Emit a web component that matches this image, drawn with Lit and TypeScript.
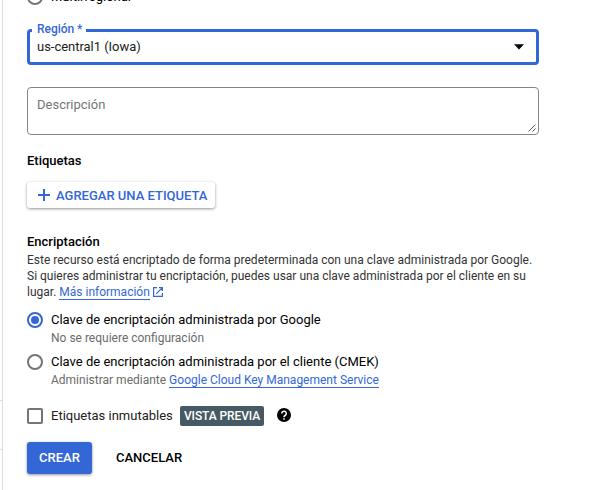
import { LitElement, html, css } from "lit";
import { customElement, property, state } from "lit/decorators.js";
import { classMap } from "lit/directives/class-map.js";

@customElement("radio-option")
class RadioOption extends LitElement {
  @property() label = "";
  @property({ type: Boolean }) checked = false;

  static styles = css`
    :host { display: grid; grid-template-columns: 16px 1fr; column-gap: 8px; }
    .dot { box-sizing: border-box; width: 16px; height: 16px; border: 2px solid #757575; border-radius: 50%; display: grid; place-items: center; }
    .dot.on { border-color: #3367d6; }
    .dot.on::after { content: ""; width: 8px; height: 8px; border-radius: 50%; background: #3367d6; }
    .label { font-size: 13px; line-height: 16px; color: #000; white-space: nowrap; }
    .hint { grid-column: 2; margin-top: 2px; font-size: 12px; line-height: 16px; color: #6b6b6b; white-space: nowrap; }
  `;

  render() {
    return html`
      <span class=${classMap({ dot: true, on: this.checked })}></span>
      <span class="label">${this.label}</span>
      <span class="hint"><slot></slot></span>
    `;
  }
}

@customElement("app-root")
class AppRoot extends LitElement {
  @state() private managed = "google";

  static styles = css`
    :host { display: grid; grid-template-columns: 3px 1fr; width: 616px; height: 490px; overflow: hidden; background: #fff; font-family: Roboto, sans-serif; }
    * { box-sizing: border-box; }
    .rail { border-right: 1px solid #dcdcdc; padding-top: 400px; display: flex; flex-direction: column; gap: 48px; }
    .rail i { height: 1px; background: #dcdcdc; }
    .form { width: 536px; padding-left: 24px; display: flex; flex-direction: column; min-height: 0; }
    .form > * { flex-shrink: 0; }
    .multi { margin-top: -11px; height: 16px; }
    .select { display: grid; height: 36px; margin: 24px 0 0; padding: 0; border: 3px solid #3367d6; border-radius: 4px; position: relative; }
    .value { display: flex; align-items: center; justify-content: space-between; padding: 0 11px 0 7px; font-size: 13px; color: #212121; }
    .value span { padding-bottom: 1px; letter-spacing: -0.03px; }
    .caption { position: absolute; left: 2px; top: -9px; padding: 0 4px 0 5px; background: #fff; color: #3367d6; font-size: 12px; font-weight: 500; line-height: 12px; letter-spacing: -0.03px; }
    .area { height: 48px; margin-top: 22px; border: 1px solid #80868b; border-radius: 4px; padding: 9px 2px 2px 9px; font-size: 13px; line-height: 16px; color: #757575; display: flex; justify-content: space-between; }
    .grip { align-self: flex-end; }
    .title { margin: 0; font-size: 13px; font-weight: 500; line-height: 16px; color: #000; }
    .tags { margin-top: 18px; }
    .add { margin-top: 13px; width: 188px; height: 26px; border-radius: 3px; background: #fff; box-shadow: 0 1px 3px rgba(0,0,0,.42); color: #3367d6; font-size: 13px; font-weight: 500; display: flex; align-items: center; gap: 6px; padding-left: 11px; white-space: nowrap; }
    .crypt { margin-top: 26px; }
    .text { margin: 2px 0 0; font-size: 12px; line-height: 16px; color: #333; white-space: nowrap; }
    .text span { display: block; }
    a { color: #3367d6; text-decoration: none; box-shadow: 0 1px #3367d6; }
    .text svg { vertical-align: -2px; margin-left: 2px; }
    .first { margin-top: 12px; }
    .second { margin-top: 8px; }
    .lock { display: flex; align-items: center; height: 20px; margin-top: 18px; font-size: 13px; color: #212121; white-space: nowrap; }
    .box { width: 16px; height: 16px; border: 2px solid #757575; border-radius: 2px; margin-right: 8px; }
    .lock .name { width: 129px; padding-bottom: 2px; }
    .help { margin-bottom: 2px; }
    .badge { width: 84px; height: 20px; border-radius: 2px; background: #455a64; color: #fff; font-size: 12px; font-weight: 500; line-height: 20px; text-align: center; letter-spacing: -0.1px; margin-right: 13px; }
    .actions { display: flex; margin-top: 16px; height: 32px; font-size: 13px; font-weight: 500; line-height: 32px; }
    .create { width: 65px; border-radius: 3px; text-align: center; background: #3367d6; color: #fff; box-shadow: 0 1px 3px rgba(0,0,0,.42); }
    .cancel { margin-left: 24px; color: #000; }
  `;

  render() {
    return html`
      <div class="rail"><i></i><i></i></div>
      <main class="form">
        <radio-option class="multi" label="Multirregional"></radio-option>
        <div class="select">
          <span class="caption">Región *</span>
          <div class="value">
            <span>us-central1 (Iowa)</span>
            <svg width="12" height="6" viewBox="0 0 12 6"><path d="M1 .3h10L6 5.5z" /></svg>
          </div>
        </div>
        <div class="area">
          <span>Descripción</span>
          <svg class="grip" width="8" height="8" viewBox="0 0 8 8" fill="none" stroke="#555"><path d="M.5 7.5l7-7M4.5 7.5l3-3" /></svg>
        </div>
        <h3 class="title tags">Etiquetas</h3>
        <div class="add">
          <svg width="12" height="12" viewBox="0 0 12 12" fill="#3367d6"><path d="M5 0h2v5h5v2H7v5H5V7H0V5h5z" /></svg>
          <span>AGREGAR UNA ETIQUETA</span>
        </div>
        <h3 class="title crypt">Encriptación</h3>
        <p class="text">
          <span>Este recurso está encriptado de forma predeterminada con una clave administrada por Google.</span>
          <span>Si quieres administrar tu encriptación, puedes usar una clave administrada por el cliente en su</span>
          <span>lugar. <a>Más información</a><svg width="12" height="12" viewBox="0 0 12 12" fill="none" stroke="#3367d6" stroke-width="1.2"><path d="M5 1.6H1.6v8.8h8.8V7M7 1.6h3.4V5M10.2 1.8L4.2 7.8" /></svg></span>
        </p>
        <radio-option class="first" label="Clave de encriptación administrada por Google" ?checked=${this.managed === "google"}>No se requiere configuración</radio-option>
        <radio-option class="second" label="Clave de encriptación administrada por el cliente (CMEK)" ?checked=${this.managed === "customer"}>Administrar mediante <a>Google Cloud Key Management Service</a></radio-option>
        <div class="lock">
          <span class="box"></span>
          <span class="name">Etiquetas inmutables</span>
          <span class="badge">VISTA PREVIA</span>
          <svg class="help" width="14" height="14" viewBox="0 0 14 14"><circle cx="7" cy="7" r="7" /><path d="M4.7 5.5a2.3 2.3 0 1 1 3.7 1.8C7.5 8 7 8.1 7 9.3M7 10.2v1.6" fill="none" stroke="#fff" stroke-width="1.5" /></svg>
        </div>
        <div class="actions">
          <span class="create">CREAR</span>
          <span class="cancel">CANCELAR</span>
        </div>
      </main>
    `;
  }
}
